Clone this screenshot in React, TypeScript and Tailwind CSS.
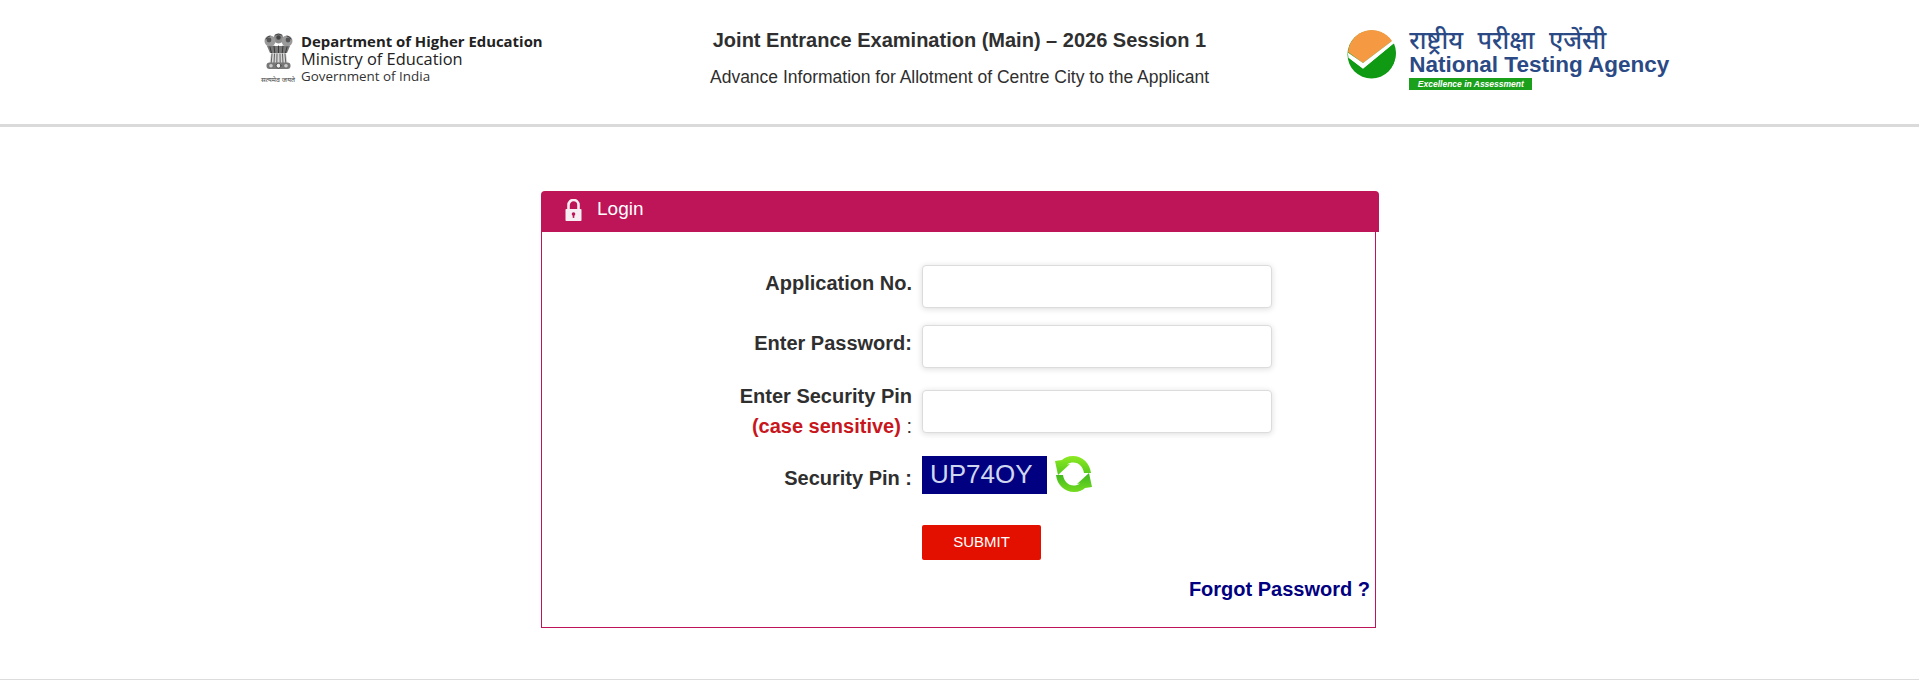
import React from 'react';

const Emblem = () => (
  <svg width="29" height="40" viewBox="0 0 29 40" className="block blur-[0.3px]">
    <g fill="none" strokeLinecap="round">
      {/* lions */}
      <circle cx="14.5" cy="5.5" r="5" fill="#8a8a8a" />
      <circle cx="6" cy="8" r="5.5" fill="#9a9a9a" />
      <circle cx="23" cy="8" r="5.5" fill="#9a9a9a" />
      <circle cx="14.5" cy="4.5" r="2.2" fill="#444" />
      <circle cx="5" cy="7" r="2.4" fill="#555" />
      <circle cx="24" cy="7" r="2.4" fill="#555" />
      <path d="M2 6q1.5-3 4-3M27 6q-1.5-3-4-3M11 2q3.5-2 7 0" stroke="#333" strokeWidth="0.8" />
      <path d="M3 13h23l-3 7H6z" fill="#777" />
      <path d="M6 14l1.5 6M10 13l.8 7M14.5 13v7M19 13l-.8 7M23 14l-1.5 6" stroke="#333" strokeWidth="0.9" />
      {/* pleats */}
      <path d="M7 20h15l1.5 10H5.5z" fill="#d6d6d6" />
      <path d="M8 21l-.8 9M10.5 21l-.5 9M13 21l-.2 9M16 21l.2 9M18.5 21l.5 9M21 21l.8 9" stroke="#555" strokeWidth="0.9" />
      {/* abacus */}
      <rect x="2.5" y="29.5" width="24" height="6.5" rx="3" fill="#777" />
      <circle cx="14.5" cy="32.7" r="2.4" fill="#eee" stroke="#333" strokeWidth="0.7" />
      <circle cx="7" cy="32.7" r="1.8" fill="#ccc" />
      <circle cx="22" cy="32.7" r="1.8" fill="#ccc" />
    </g>
  </svg>
);

const NtaMark = () => (
  <svg width="49" height="49" viewBox="0 0 49 49" className="block">
    <circle cx="24.5" cy="24.5" r="24" fill="#109a14" />
    <path d="M1 22 16 33 45 11A24 24 0 0 0 1 22z" fill="#f59a42" />
    <path d="M0.8 22.5 16 33 45 11 47 13.5 16 39 1.5 28z" fill="#fff" />
    <path d="M1.5 28 16 39 47 13.5A24 24 0 1 1 1.5 28z" fill="#109a14" />
  </svg>
);

const RefreshIcon = () => (
  <svg width="39" height="38" viewBox="0 0 39 38" className="block -mt-[1px]">
    <defs>
      <linearGradient id="arrowTop" x1="0" y1="0" x2="0" y2="1">
        <stop offset="0" stopColor="#8eea22" />
        <stop offset="1" stopColor="#54c81c" />
      </linearGradient>
      <linearGradient id="arrowBottom" x1="0" y1="1" x2="0" y2="0">
        <stop offset="0" stopColor="#3db51e" />
        <stop offset="1" stopColor="#74dc20" />
      </linearGradient>
    </defs>
    <path d="M37 18C36 8 28 1 19 1 14 1 10 3 8 5L1 6 4 20 16 9 13 9.5C15 8 17 7.5 19.5 7.5 25 7.5 29 12 30 18Z" fill="url(#arrowTop)" />
    <path d="M37 18C36 8 28 1 19 1 14 1 10 3 8 5L1 6 4 20 16 9 13 9.5C15 8 17 7.5 19.5 7.5 25 7.5 29 12 30 18Z" fill="url(#arrowBottom)" transform="rotate(180 19.5 19)" />
  </svg>
);

const LockIcon = () => (
  <svg width="17" height="22" viewBox="0 0 17 22" className="block">
    <path d="M3.5 11V6a5 5 0 0 1 10 0V11" fill="none" stroke="#f6eef2" strokeWidth="2.6" />
    <rect x="0.5" y="10" width="16" height="12" rx="0.8" fill="#f6eef2" />
    <circle cx="8.5" cy="15" r="1.8" fill="#bd1558" />
    <rect x="7.7" y="15.5" width="1.6" height="3.4" fill="#bd1558" />
  </svg>
);

const inputClass =
  'w-[350px] h-[43px] bg-white border border-[#dcdcdc] rounded-[4px] shadow-[0_1px_6px_rgba(0,0,0,0.14)]';

export default function App() {
  return (
    <div className="h-[680px] bg-white overflow-hidden font-['Liberation_Sans',Arial,sans-serif] text-[#2f2f2f]">
      <header className="grid grid-cols-3 items-start h-[127px] border-b-[3px] border-[#dadada]">
        <div className="flex items-start gap-[5px] pl-[262px] pt-[33px]">
          <div className="flex flex-col items-center w-[32px]">
            <Emblem />
            <span className="mt-[3px] text-[7px] leading-[8px] whitespace-nowrap text-[#444] font-['Noto_Sans',sans-serif]">
              सत्यमेव जयते
            </span>
          </div>
          <div className="font-['Open_Sans',sans-serif] text-[#222] pl-[2px]">
            <div className="text-[14.9px] leading-[17px] font-bold whitespace-nowrap">Department of Higher Education</div>
            <div className="text-[16.4px] leading-[18px] whitespace-nowrap">Ministry of Education</div>
            <div className="text-[13.4px] leading-[16px] text-[#333] whitespace-nowrap">Government of India</div>
          </div>
        </div>
        <div className="text-center pt-[27px]">
          <h1 className="text-[20px] leading-[26px] font-bold whitespace-nowrap">Joint Entrance Examination (Main) – 2026 Session 1</h1>
          <p className="text-[17.5px] leading-[24px] mt-[12px] whitespace-nowrap">Advance Information for Allotment of Centre City to the Applicant</p>
        </div>
        <div className="flex items-start gap-[13px] pl-[68px] pt-[30px]">
          <NtaMark />
          <div className="text-[#2b4a85] -mt-[3px]">
            <div className="text-[25px] leading-[25px] font-medium font-['Noto_Sans',sans-serif] whitespace-nowrap [word-spacing:8px]">राष्ट्रीय परीक्षा एजेंसी</div>
            <div className="text-[22.5px] leading-[26px] font-bold whitespace-nowrap">National Testing Agency</div>
            <div className="w-[123px] h-[12px] bg-[#1aa01a] text-white text-[8.5px] leading-[12px] font-bold italic text-center whitespace-nowrap">
              Excellence in Assessment
            </div>
          </div>
        </div>
      </header>

      <main className="ml-[541px] mt-[64px] w-[838px]">
        <div className="flex items-center h-[41px] bg-[#bd1558] rounded-t-[4px] pl-[24px] pb-[4px] text-white text-[19px]">
          <LockIcon />
          <span className="ml-[15px]">Login</span>
        </div>
        <div className="w-[835px] h-[396px] border border-t-0 border-[#bd1558] pt-[33px] pr-[6px]">
          <form className="flex flex-col">
            <div className="flex gap-[10px]">
              <label className="w-[370px] text-right text-[20px] leading-[36px] font-bold">Application No.</label>
              <div className={inputClass} />
            </div>
            <div className="flex gap-[10px] mt-[17px]">
              <label className="w-[370px] text-right text-[20px] leading-[36px] font-bold">Enter Password:</label>
              <div className={inputClass} />
            </div>
            <div className="flex gap-[10px] mt-[22px]">
              <label className="w-[370px] -mt-[9px] text-right text-[20px] leading-[30px] font-bold">
                Enter Security Pin
                <br />
                <span className="text-[#c8161d]">(case sensitive)</span> <span className="font-normal">:</span>
              </label>
              <div className={inputClass} />
            </div>
            <div className="flex gap-[10px] mt-[15px]">
              <label className="w-[370px] text-right text-[20px] leading-[44px] font-bold">Security Pin :</label>
              <div className="flex items-start gap-[7px]">
                <div className="w-[125px] h-[38px] bg-[#000080] text-[#cfd6f0] text-[26px] leading-[37px] pl-[8px]">UP74OY</div>
                <RefreshIcon />
              </div>
            </div>
            <div className="flex mt-[25px] pl-[380px]">
              <button type="button" className="w-[119px] h-[35px] bg-[#e31000] rounded-[2px] text-white text-[15px]">
                SUBMIT
              </button>
            </div>
            <div className="mt-[16px] -mr-[1px] text-right text-[20px] leading-[26px] font-bold text-[#000080]">Forgot Password ?</div>
          </form>
        </div>
      </main>

      <div className="mt-[51px] border-t border-[#dcdcdc]" />
    </div>
  );
}
